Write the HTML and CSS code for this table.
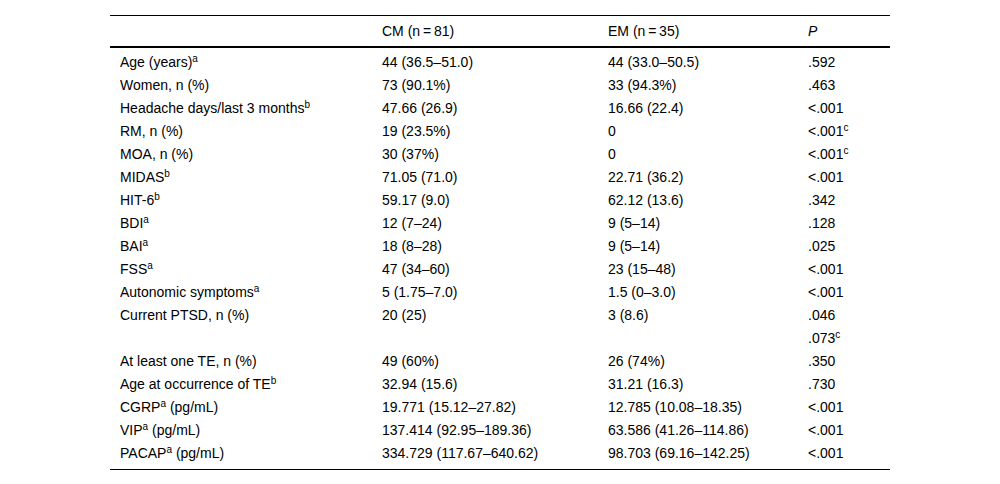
FILE: index.html
```html
<!DOCTYPE html>
<html lang="en">
<head>
<meta charset="utf-8">
<title>Table</title>
<link rel="stylesheet" href="styles.css">
</head>
<body>
<table class="data">
  <colgroup>
    <col class="c1"><col class="c2"><col class="c3"><col class="c4">
  </colgroup>
  <thead>
    <tr>
      <th></th>
      <th>CM (n&#8201;=&#8201;81)</th>
      <th>EM (n&#8201;=&#8201;35)</th>
      <th><i>P</i></th>
    </tr>
  </thead>
  <tbody>
    <tr><td>Age (years)<sup>a</sup></td><td>44 (36.5–51.0)</td><td>44 (33.0–50.5)</td><td>.592</td></tr>
    <tr><td>Women, n (%)</td><td>73 (90.1%)</td><td>33 (94.3%)</td><td>.463</td></tr>
    <tr><td>Headache days/last 3 months<sup>b</sup></td><td>47.66 (26.9)</td><td>16.66 (22.4)</td><td>&lt;.001</td></tr>
    <tr><td>RM, n (%)</td><td>19 (23.5%)</td><td>0</td><td>&lt;.001<sup>c</sup></td></tr>
    <tr><td>MOA, n (%)</td><td>30 (37%)</td><td>0</td><td>&lt;.001<sup>c</sup></td></tr>
    <tr><td>MIDAS<sup>b</sup></td><td>71.05 (71.0)</td><td>22.71 (36.2)</td><td>&lt;.001</td></tr>
    <tr><td>HIT-6<sup>b</sup></td><td>59.17 (9.0)</td><td>62.12 (13.6)</td><td>.342</td></tr>
    <tr><td>BDI<sup>a</sup></td><td>12 (7–24)</td><td>9 (5–14)</td><td>.128</td></tr>
    <tr><td>BAI<sup>a</sup></td><td>18 (8–28)</td><td>9 (5–14)</td><td>.025</td></tr>
    <tr><td>FSS<sup>a</sup></td><td>47 (34–60)</td><td>23 (15–48)</td><td>&lt;.001</td></tr>
    <tr><td>Autonomic symptoms<sup>a</sup></td><td>5 (1.75–7.0)</td><td>1.5 (0–3.0)</td><td>&lt;.001</td></tr>
    <tr><td>Current PTSD, n (%)</td><td>20 (25)</td><td>3 (8.6)</td><td>.046</td></tr>
    <tr><td></td><td></td><td></td><td>.073<sup>c</sup></td></tr>
    <tr><td>At least one TE, n (%)</td><td>49 (60%)</td><td>26 (74%)</td><td>.350</td></tr>
    <tr><td>Age at occurrence of TE<sup>b</sup></td><td>32.94 (15.6)</td><td>31.21 (16.3)</td><td>.730</td></tr>
    <tr><td>CGRP<sup>a</sup> (pg/mL)</td><td>19.771 (15.12–27.82)</td><td>12.785 (10.08–18.35)</td><td>&lt;.001</td></tr>
    <tr><td>VIP<sup>a</sup> (pg/mL)</td><td>137.414 (92.95–189.36)</td><td>63.586 (41.26–114.86)</td><td>&lt;.001</td></tr>
    <tr><td>PACAP<sup>a</sup> (pg/mL)</td><td>334.729 (117.67–640.62)</td><td>98.703 (69.16–142.25)</td><td>&lt;.001</td></tr>
  </tbody>
</table>
</body>
</html>
```

FILE: styles.css
```css
html, body {
  margin: 0;
  padding: 0;
  background: #fff;
}

body {
  font-family: "Liberation Sans", Arial, sans-serif;
  font-size: 14px;
  color: #000;
}

.data {
  margin: 15px 0 0 110px;
  border-collapse: separate;
  border-spacing: 0;
  table-layout: fixed;
  width: 780px;
}

.c1 { width: 262px; }
.c2 { width: 226px; }
.c3 { width: 200px; }
.c4 { width: 92px; }

.data th {
  font-weight: normal;
  text-align: left;
  padding: 0 10px;
  line-height: 30px;
  border-top: 1px solid #000;
  border-bottom: 2px solid #000;
  white-space: nowrap;
}

.data td {
  padding: 0 10px;
  line-height: 23px;
  white-space: nowrap;
  vertical-align: top;
}

.data tbody tr:first-child td {
  padding-top: 3px;
}

.data tbody tr:last-child td {
  padding-bottom: 4px;
  border-bottom: 1px solid #000;
}

.data sup {
  font-size: 10px;
  line-height: 0;
  vertical-align: 5px;
}
```
